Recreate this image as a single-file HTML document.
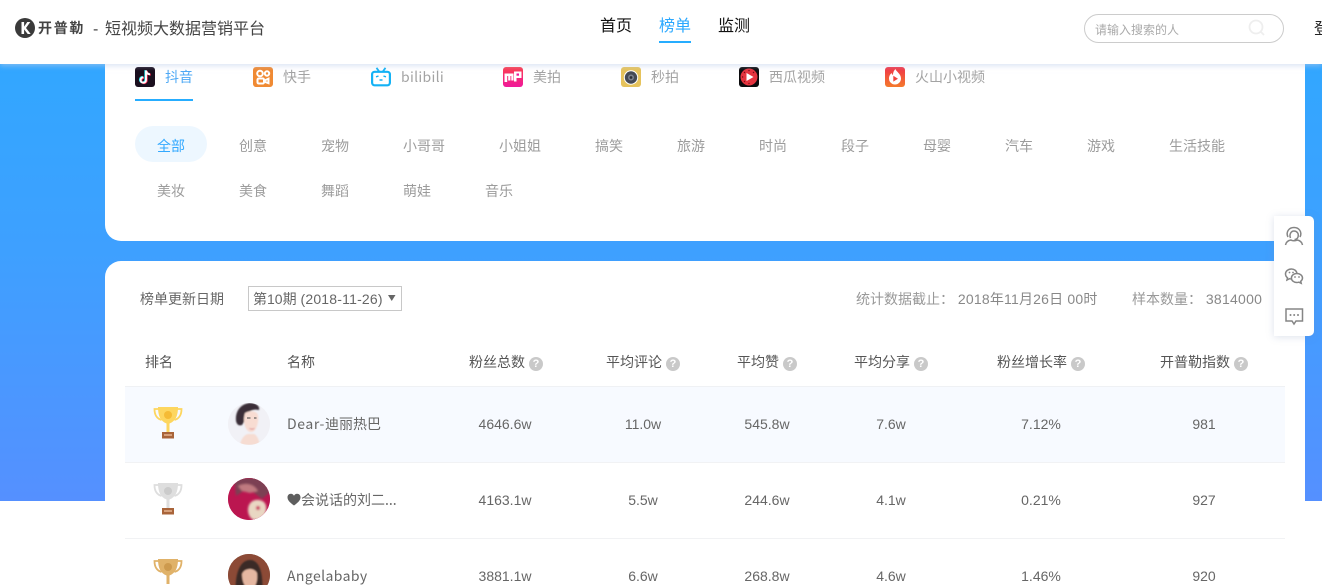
<!DOCTYPE html>
<html lang="zh">
<head>
<meta charset="utf-8">
<title>开普勒 - 短视频大数据营销平台</title>
<style>
html,body{margin:0;padding:0;width:1322px;height:585px;overflow:hidden;background:#fff}
body{position:relative;font-family:"Liberation Sans","Noto Sans CJK SC","WenQuanYi Zen Hei",sans-serif;color:#666}
.bg{position:absolute;left:0;top:0;width:1322px;height:501px;background:linear-gradient(180deg,#2ea9ff 0%,#3ea0ff 50%,#5590ff 100%)}
.card{position:absolute;left:105px;width:1200px;background:#fff}
.hd{position:absolute;left:0;top:0;width:1322px;height:64px;background:#fff;box-shadow:0 2px 5px rgba(190,205,235,.55);z-index:5}
.t{position:absolute;white-space:nowrap;line-height:20px;height:20px;font-size:14px}
.i{position:absolute;display:block}
.tab{color:#a3a3a3;top:67px}
.cat{color:#9c9c9c;font-size:14px;width:100px;text-align:center}
.th{color:#555;font-size:14px;top:352px}
.q{display:inline-block;width:14px;height:14px;border-radius:50%;background:#c9c9c9;color:#fff;font-size:11px;line-height:14px;text-align:center;font-weight:bold;vertical-align:0;margin-left:4px}
.td{color:#666;font-size:14px;width:120px;text-align:center}
.rowb{position:absolute;left:125px;width:1160px;height:1px;background:#f1f2f4}
.side{position:absolute;left:1274px;top:216px;width:40px;height:120px;background:#fff;border-radius:0 5px 5px 0;box-shadow:0 1px 8px rgba(120,140,180,.25);z-index:4}
.av{position:absolute;left:228px;width:42px;height:42px;border-radius:50%;overflow:hidden}
.nm{font-family:"Noto Sans CJK SC","Liberation Sans",sans-serif}
.ls{letter-spacing:.4px}
</style>
</head>
<body>
<div class="bg"></div>

<div class="card" style="top:50px;height:191px;border-radius:0 0 16px 16px"></div>
<div class="card" style="top:261px;height:324px;border-radius:16px 16px 0 0"></div>

<div class="hd"></div>
<div style="position:absolute;left:0;top:0;z-index:6;width:1322px;height:64px">
  <svg class="i" style="left:15px;top:18px" width="20" height="20" viewBox="0 0 20 20"><circle cx="10" cy="10" r="10" fill="#3a3a3a"/><path d="M6.500 4v12h2.600v-4.600l3.600 4.600h3l-4.700-6 4.300-6h-3L9.100 8.600V4z" fill="#fff"/></svg>
  <div class="t" style="left:38px;top:18px;font-size:14px;font-weight:bold;color:#444;letter-spacing:1.700px">开普勒</div>
  <div class="t" style="left:93px;top:20px;font-size:16px;color:#444">-</div>
  <div class="t" style="left:105px;top:20px;font-size:16px;color:#444">短视频大数据营销平台</div>
  <div class="t" style="left:600px;top:17px;font-size:16px;color:#111">首页</div>
  <div class="t" style="left:659px;top:17px;font-size:16px;color:#2aa8ff">榜单</div>
  <div style="position:absolute;left:659px;top:41px;width:32px;height:2px;background:#26adff"></div>
  <div class="t" style="left:718px;top:17px;font-size:16px;color:#111">监测</div>
  <div style="position:absolute;left:1084px;top:14px;width:198px;height:27px;border:1px solid #ccc;border-radius:15px"></div>
  <div class="t" style="left:1095px;top:20px;font-size:12px;color:#aaa">请输入搜索的人</div>
  <svg class="i" style="left:1248px;top:19px" width="18" height="18" viewBox="0 0 18 18" fill="none" stroke="#eee" stroke-width="1.800"><circle cx="8" cy="8" r="6.500"/><path d="M13 13l3 3"/></svg>
  <div class="t" style="left:1314px;top:20px;font-size:16px;color:#222">登录</div>
</div>

<!-- platform tabs -->
<svg class="i" style="left:135px;top:67px" width="20" height="20" viewBox="0 0 20 20"><rect width="20" height="20" rx="3" fill="#1a0f1e"/><path d="M11 3.500v9.500a2.700 2.700 0 1 1-2.700-2.700M11 3.500c.2 2.200 1.800 3.600 4 3.800" fill="none" stroke="#25e0e8" stroke-width="2" transform="translate(-.7 -.4)"/><path d="M11 3.500v9.500a2.700 2.700 0 1 1-2.700-2.700M11 3.500c.2 2.200 1.800 3.600 4 3.800" fill="none" stroke="#fe2c55" stroke-width="2" transform="translate(.7 .4)"/><path d="M11 3.500v9.500a2.700 2.700 0 1 1-2.700-2.700M11 3.500c.2 2.200 1.800 3.600 4 3.800" fill="none" stroke="#fff" stroke-width="1.900"/></svg>
<div class="t" style="left:165px;top:67px;color:#4ea9f5;font-size:14px">抖音</div>
<div style="position:absolute;left:135px;top:99px;width:58px;height:2px;background:#26adff"></div>

<svg class="i" style="left:253px;top:67px" width="20" height="20" viewBox="0 0 20 20"><rect width="20" height="20" rx="3" fill="#f08a33"/><g fill="none" stroke="#fff" stroke-width="2"><circle cx="7" cy="6.500" r="2.800"/><circle cx="14" cy="6.500" r="2.200"/><rect x="4.500" y="11.500" width="6.500" height="5" rx="1.200"/><path d="M11.500 13.500l4-1.800v4.500l-4-1.500"/></g></svg>
<div class="t tab" style="left:283px">快手</div>

<svg class="i" style="left:371px;top:67px" width="20" height="20" viewBox="0 0 20 20" fill="none" stroke="#14b2f5" stroke-width="2.200"><rect x="1.100" y="4.800" width="17.800" height="13.500" rx="2.500"/><path d="M5.500 .8l2.500 3.500M14.500 .8L12 4.300" stroke-width="1.800"/><path d="M5 9.800l2.500-.7M15 9.800l-2.500-.7M8.500 13h3" stroke-width="1.400"/></svg>
<div class="t tab nm" style="left:401px;letter-spacing:.3px">bilibili</div>

<svg class="i" style="left:503px;top:67px" width="20" height="20" viewBox="0 0 20 20"><defs><linearGradient id="mp" x1="0" y1="0" x2="0" y2="1"><stop offset="0" stop-color="#fb3d4e"/><stop offset="1" stop-color="#f0189b"/></linearGradient></defs><rect width="20" height="20" rx="3" fill="url(#mp)"/><path d="M1.500 6.500h9v7h-2.200v-4.500h-.9v4.500H5.200v-4.500h-1v6H1.500zM11 4.500h7.500v6.500h-5v3.500H11z" fill="#fff"/><rect x="13.500" y="6.500" width="2.500" height="2.200" fill="#f0189b"/></svg>
<div class="t tab" style="left:533px">美拍</div>

<svg class="i" style="left:621px;top:67px" width="20" height="20" viewBox="0 0 20 20"><rect width="20" height="20" rx="3" fill="#e6c35c"/><circle cx="10" cy="10.500" r="7.200" fill="#fff"/><circle cx="10" cy="10.500" r="6.200" fill="#454a55"/><circle cx="10" cy="10.500" r="3" fill="#7a808c"/><circle cx="10" cy="10.500" r="1.400" fill="#2b2e36"/></svg>
<div class="t tab" style="left:651px">秒拍</div>

<svg class="i" style="left:739px;top:67px" width="20" height="20" viewBox="0 0 20 20"><rect width="20" height="20" rx="3" fill="#0b0b0d"/><circle cx="10" cy="10" r="8.500" fill="#e5343f"/><path d="M7.500 6l7 4-7 4z" fill="#fff"/><g fill="#7a1018"><circle cx="10" cy="3.600" r=".7"/><circle cx="10" cy="16.400" r=".7"/><circle cx="3.600" cy="10" r=".7"/><circle cx="5.500" cy="5.500" r=".7"/><circle cx="5.500" cy="14.500" r=".7"/><circle cx="14.500" cy="5.500" r=".7"/></g></svg>
<div class="t tab" style="left:769px">西瓜视频</div>

<svg class="i" style="left:885px;top:67px" width="20" height="20" viewBox="0 0 20 20"><defs><linearGradient id="hs" x1="0" y1="0" x2="0" y2="1"><stop offset="0" stop-color="#f0344a"/><stop offset="1" stop-color="#f47a2c"/></linearGradient></defs><rect width="20" height="20" rx="3" fill="url(#hs)"/><path d="M10.500 2c.4 2.500 5.500 4.500 5.500 9.500a6 6 0 0 1-12 0c0-2.800 1.300-4.300 2.700-5.500.1 1 .5 1.600 1.200 2 .2-2.500.9-4.500 2.600-6z" fill="#fff"/><path d="M8.300 8.800l4.700 2.900-4.700 2.900z" fill="#f0443f"/></svg>
<div class="t tab" style="left:915px">火山小视频</div>

<!-- categories -->
<div style="position:absolute;left:135px;top:126px;width:72px;height:36px;border-radius:18px;background:#edf7ff"></div>
<div class="t cat" style="left:121px;top:136px;color:#33a9ff">全部</div>
<div class="t cat" style="left:203px;top:136px">创意</div>
<div class="t cat" style="left:285px;top:136px">宠物</div>
<div class="t cat" style="left:374px;top:136px">小哥哥</div>
<div class="t cat" style="left:470px;top:136px">小姐姐</div>
<div class="t cat" style="left:559px;top:136px">搞笑</div>
<div class="t cat" style="left:641px;top:136px">旅游</div>
<div class="t cat" style="left:723px;top:136px">时尚</div>
<div class="t cat" style="left:805px;top:136px">段子</div>
<div class="t cat" style="left:887px;top:136px">母婴</div>
<div class="t cat" style="left:969px;top:136px">汽车</div>
<div class="t cat" style="left:1051px;top:136px">游戏</div>
<div class="t cat" style="left:1147px;top:136px">生活技能</div>
<div class="t cat" style="left:121px;top:181px">美妆</div>
<div class="t cat" style="left:203px;top:181px">美食</div>
<div class="t cat" style="left:285px;top:181px">舞蹈</div>
<div class="t cat" style="left:367px;top:181px">萌娃</div>
<div class="t cat" style="left:449px;top:181px">音乐</div>

<!-- date bar -->
<div class="t" style="left:140px;top:289px;font-size:14px;color:#666">榜单更新日期</div>
<div style="position:absolute;left:248px;top:286px;width:152px;height:23px;border:1px solid #c8c8c8"></div>
<div class="t" style="left:253px;top:289px;font-size:14px;color:#666">第10期 <span style="letter-spacing:.2px">(2018-11-26)</span></div>
<svg class="i" style="left:388px;top:295px" width="8" height="6" viewBox="0 0 8 6"><path d="M0 0h7.500L3.750 6z" fill="#666"/></svg>
<div class="t" style="left:856px;top:289px;font-size:14px;color:#999">统计数据截止： <span style="color:#888;letter-spacing:.2px">2018年11月26日 00时</span></div>
<div class="t" style="left:1132px;top:289px;font-size:14px;color:#999">样本数量： <span style="color:#888;letter-spacing:.25px">3814000</span></div>

<!-- table head -->
<div class="t th" style="left:145px">排名</div>
<div class="t th" style="left:287px">名称</div>
<div class="t th" style="left:469px">粉丝总数<span class="q">?</span></div>
<div class="t th" style="left:606px">平均评论<span class="q">?</span></div>
<div class="t th" style="left:737px">平均赞<span class="q">?</span></div>
<div class="t th" style="left:854px">平均分享<span class="q">?</span></div>
<div class="t th" style="left:997px">粉丝增长率<span class="q">?</span></div>
<div class="t th" style="left:1160px">开普勒指数<span class="q">?</span></div>

<div style="position:absolute;left:125px;top:386px;width:1160px;height:76px;background:#f7faff;border-top:1px solid #eff1f4;box-sizing:border-box"></div>
<div class="rowb" style="top:462px"></div>
<div class="rowb" style="top:538px"></div>

<!-- trophies -->
<svg class="i" style="left:153px;top:406px" width="30" height="34" viewBox="0 0 30 34"><g fill="none" stroke="#fdd65f" stroke-width="1.800"><path d="M6 3H1.500c0 6 2 9.500 7 11M24 3h4.500c0 6-2 9.500-7 11"/></g><path d="M5 1h20c0 9-2.500 14-8.500 16.500v8.500h-3v-8.500C7.500 15 5 10 5 1z" fill="#fdd65f"/><circle cx="15" cy="9" r="4" fill="#f5bb35"/><rect x="9" y="26" width="12" height="6.500" fill="#a9643a"/><rect x="11" y="28" width="8" height="2" fill="#d6a07a"/></svg>
<svg class="i" style="left:153px;top:482px" width="30" height="34" viewBox="0 0 30 34"><g fill="none" stroke="#dedede" stroke-width="1.800"><path d="M6 3H1.500c0 6 2 9.500 7 11M24 3h4.500c0 6-2 9.500-7 11"/></g><path d="M5 1h20c0 9-2.500 14-8.500 16.500v8.500h-3v-8.500C7.500 15 5 10 5 1z" fill="#dedede"/><circle cx="15" cy="9" r="4" fill="#cbcbcb"/><rect x="9" y="26" width="12" height="6.500" fill="#a9643a"/><rect x="11" y="28" width="8" height="2" fill="#d6a07a"/></svg>
<svg class="i" style="left:153px;top:558px" width="30" height="34" viewBox="0 0 30 34"><g fill="none" stroke="#e0b269" stroke-width="1.800"><path d="M6 3H1.500c0 6 2 9.500 7 11M24 3h4.500c0 6-2 9.500-7 11"/></g><path d="M5 1h20c0 9-2.500 14-8.500 16.500v8.500h-3v-8.500C7.500 15 5 10 5 1z" fill="#e0b269"/><circle cx="15" cy="9" r="4" fill="#cd9a4e"/></svg>

<!-- avatars -->
<div class="av" style="top:403px;background:#f2f2f7">
  <svg width="42" height="42" viewBox="0 0 42 42"><defs><filter id="b1"><feGaussianBlur stdDeviation=".8"/></filter></defs><rect width="42" height="42" fill="#f1f1f6"/><g filter="url(#b1)"><path d="M8 18C7 6 15 0 23 0c6 0 9 4 8 7-4-1-9 0-11 3-2 4-3 8-6 12-3 1-5 0-6-4z" fill="#3a2f38"/><path d="M17 10c5-3 12-2 13 2 1 6-1 13-4 16-3 2-5 1-7-1-3-4-4-11-2-17z" fill="#f8dcd2"/><path d="M12 42c1-6 4-10 8-11l6 0c3 1 5 6 6 11z" fill="#f6dcd2"/><path d="M21 25c2 1 4 1 6 0-1 2-5 2-6 0z" fill="#d0606c"/></g><path d="M19 15h3.500M26 15h2.500" stroke="#444" stroke-width="1"/></svg>
</div>
<div class="av" style="top:478px;background:#b5124e">
  <svg width="42" height="42" viewBox="0 0 42 42"><defs><filter id="b2"><feGaussianBlur stdDeviation="1"/></filter></defs><rect width="42" height="42" fill="#bb1650"/><g filter="url(#b2)"><path d="M6 0h30l6 14-8 7-14-11L8 18z" fill="#7c3f52"/><path d="M10 8c8-4 16-2 20 5l-8 2-8-2z" fill="#c07a80"/><path d="M20 32c0-7 5-11 11-10 6 1 8 5 7 11-1 6-6 9-11 9-4 0-7-5-7-10z" fill="#e9d7c3"/><circle cx="30" cy="30" r="2" fill="#c92b5a"/></g></svg>
</div>
<div class="av" style="top:554px;background:#7a4232">
  <svg width="42" height="42" viewBox="0 0 42 42"><defs><filter id="b3"><feGaussianBlur stdDeviation=".8"/></filter></defs><rect width="42" height="42" fill="#8c4a36"/><g filter="url(#b3)"><path d="M8 42C6 20 12 6 22 6c9 0 14 12 12 36z" fill="#3b2a26"/><path d="M14 20c2-6 12-7 15-1 1 8-1 14-7 18-5-3-8-9-8-17z" fill="#e5b7a1"/></g></svg>
</div>

<!-- names -->
<div class="t nm" style="left:287px;top:414px;font-size:14px;color:#666"><span style="letter-spacing:.6px">Dear-</span>迪丽热巴</div>
<div class="t nm" style="left:287px;top:490px;font-size:14px;color:#666"><svg width="14" height="13" viewBox="0 0 14 13" style="vertical-align:-1px"><path d="M7 12.500C2 9 .5 6.800.5 4.300.5 2.200 2 .8 3.900.8 5.200.8 6.300 1.500 7 2.700 7.700 1.500 8.800.8 10.100.8 12 .8 13.500 2.200 13.500 4.300c0 2.500-1.500 4.700-6.500 8.200z" fill="#5e5e5e"/></svg>会说话的刘二...</div>
<div class="t nm ls" style="left:287px;top:566px;font-size:14px;color:#666">Angelababy</div>

<!-- row 1 -->
<div class="t td" style="left:445px;top:414px">4646.6w</div>
<div class="t td" style="left:583px;top:414px">11.0w</div>
<div class="t td" style="left:707px;top:414px">545.8w</div>
<div class="t td" style="left:831px;top:414px">7.6w</div>
<div class="t td" style="left:981px;top:414px">7.12%</div>
<div class="t td" style="left:1144px;top:414px">981</div>
<!-- row 2 -->
<div class="t td" style="left:445px;top:490px">4163.1w</div>
<div class="t td" style="left:583px;top:490px">5.5w</div>
<div class="t td" style="left:707px;top:490px">244.6w</div>
<div class="t td" style="left:831px;top:490px">4.1w</div>
<div class="t td" style="left:981px;top:490px">0.21%</div>
<div class="t td" style="left:1144px;top:490px">927</div>
<!-- row 3 -->
<div class="t td" style="left:445px;top:566px">3881.1w</div>
<div class="t td" style="left:583px;top:566px">6.6w</div>
<div class="t td" style="left:707px;top:566px">268.8w</div>
<div class="t td" style="left:831px;top:566px">4.6w</div>
<div class="t td" style="left:981px;top:566px">1.46%</div>
<div class="t td" style="left:1144px;top:566px">920</div>

<!-- side bar -->
<div class="side">
  <svg class="i" style="left:10px;top:10px" width="20" height="20" viewBox="0 0 20 20" fill="none" stroke="#858585" stroke-width="1.500"><path d="M4 11c-2.500-5 1-9.500 6-9.500s8.500 4.500 6 9.500"/><path d="M6.500 12c-1.500-3.500.5-7 3.500-7s5 2.500 4 6c-.5 1.500-2 2.500-3.500 2.500"/><path d="M1.500 19c.5-3 2.500-4.500 5.500-5 1 1 5 1 6 0 3 .5 5 2 5.500 5"/></svg>
  <svg class="i" style="left:10px;top:50px" width="20" height="20" viewBox="0 0 20 20" fill="none" stroke="#858585" stroke-width="1.500"><path d="M13 7.500C12.500 4.500 10 3 7.500 3 4 3 1.500 5.300 1.500 8c0 1.700 1 3 2 3.800L3 14l2.500-1.300c.7.200 1.300.3 2 .3"/><path d="M12.800 7.500c3.200 0 5.700 2 5.700 4.500 0 1.400-.8 2.500-1.800 3.300l.5 2-2.300-1.100c-.7.200-1.400.3-2.100.3-3 0-5.400-2-5.400-4.500s2.400-4.500 5.400-4.500z"/><g fill="#858585" stroke="none"><circle cx="5.500" cy="6.500" r=".9"/><circle cx="9" cy="6.500" r=".9"/><circle cx="11" cy="11" r=".9"/><circle cx="15" cy="11" r=".9"/></g></svg>
  <svg class="i" style="left:10px;top:90px" width="20" height="20" viewBox="0 0 20 20" fill="none" stroke="#858585" stroke-width="1.500"><path d="M2 3h16.500v12h-6.500L10 18l-2-3H2z"/><g fill="#858585" stroke="none"><circle cx="6.500" cy="9" r="1"/><circle cx="10.200" cy="9" r="1"/><circle cx="14" cy="9" r="1"/></g></svg>
</div>
</body>
</html>
